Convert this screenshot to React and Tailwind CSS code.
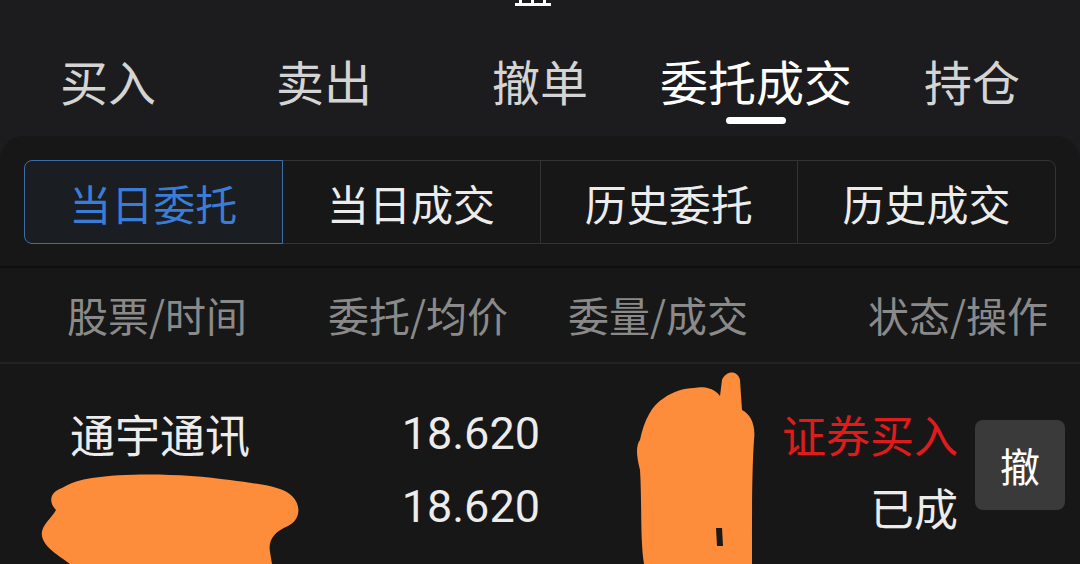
import React, { useState } from 'react'

const CJK = { fontFamily: '"Noto Sans CJK SC", "Noto Sans", sans-serif' }
const NUM = { fontFamily: 'Roboto, "Noto Sans CJK SC", sans-serif' }

const topTabs = ['买入', '卖出', '撤单', '委托成交', '持仓']
const subTabs = ['当日委托', '当日成交', '历史委托', '历史成交']

// Partial status-bar glyph cut off at the top edge
const StatusGlyph = () => (
  <svg width="36" height="6" viewBox="0 0 36 6" className="block">
    <rect x="0" y="3" width="36" height="3" fill="#fff" />
    <rect x="4" y="0" width="3" height="3" fill="#fff" />
    <rect x="16" y="0" width="3" height="3" fill="#fff" />
    <rect x="28" y="0" width="3" height="3" fill="#fff" />
  </svg>
)

// Orange redaction scribbles drawn over the row
const Redactions = () => (
  <svg
    className="absolute left-0 top-0 pointer-events-none"
    width="1080"
    height="564"
    viewBox="0 0 1080 564"
  >
    <path
      fill="#fd8c3b"
      d="M92 478 C130 472 190 474 230 480 C258 484 282 486 292 496 C302 506 300 520 288 526 C274 532 268 540 270 552 L272 564 L70 564 C60 556 44 548 42 536 C40 526 52 518 56 510 C48 502 50 492 62 488 C72 482 80 480 92 478 Z"
    />
    <path
      fill="#fd8c3b"
      d="M722 380 C726 370 738 370 740 380 L742 410 C750 414 756 424 754 440 C752 470 752 510 752 540 L752 564 L644 564 C640 540 642 500 640 470 C636 455 636 445 640 440 C644 420 652 405 664 398 C672 392 684 388 694 388 C704 386 714 388 720 396 Z"
    />
    <path fill="#1a1a1a" d="M716 528 L722 528 L723 546 L717 546 Z" />
  </svg>
)

export default function App() {
  const [top, setTop] = useState(3)
  const [sub, setSub] = useState(0)

  return (
    <div className="w-[1080px] h-[564px] overflow-hidden bg-[#1c1c1e] relative" style={CJK}>
      {/* status bar remnant */}
      <div className="h-0 flex justify-center">
        <div className="ml-[-15px]">
          <StatusGlyph />
        </div>
      </div>

      {/* top tabs */}
      <div className="h-[136px] grid grid-cols-5 pt-[50px]">
        {topTabs.map((t, i) => (
          <button
            key={t}
            onClick={() => setTop(i)}
            className="flex flex-col items-center"
          >
            <span
              className={`text-[48px] leading-[60px] ${
                i === top ? 'text-white' : 'text-[#d4d4d4]'
              }`}
            >
              {t}
            </span>
            {i === top && <span className="mt-[7px] w-[60px] h-[7px] rounded-full bg-white" />}
          </button>
        ))}
      </div>

      {/* panel */}
      <div className="bg-[#171717] rounded-t-[24px] h-[428px]">
        <div className="px-[24px] pt-[24px] pb-[22px]">
          <div className="flex h-[84px]">
            {subTabs.map((t, i) => (
              <button
                key={t}
                onClick={() => setSub(i)}
                className={`flex-1 flex items-center justify-center text-[42px] border ${
                  i > 0 ? '-ml-px' : 'rounded-l-[8px]'
                } ${i === subTabs.length - 1 ? 'rounded-r-[8px]' : ''} ${
                  i === sub
                    ? 'relative z-10 bg-[#1a1d22] text-[#3b7dd6] border-[#3d6ea6]'
                    : 'border-[#333] text-[#ececec]'
                }`}
              >
                {t}
              </button>
            ))}
          </div>
        </div>

        <div className="h-[2px] bg-[#0e0e0e]" />

        {/* header */}
        <div className="h-[96px] flex items-center text-[41px] text-[#8a8a8a] border-b-2 border-[#222]">
          <div className="w-[328px] pl-[67px]">股票/时间</div>
          <div className="w-[240px]">委托/均价</div>
          <div className="flex-1">委量/成交</div>
          <div className="pr-[32px]">状态/操作</div>
        </div>

        {/* order row */}
        <div className="flex pt-[43px]">
          <div className="w-[300px] pl-[70px] text-[45px] text-[#ececec] leading-[54px]">通宇通讯</div>
          <div className="w-[240px] flex flex-col items-end text-[45px] text-[#ececec] gap-[19px]" style={NUM}>
            <span className="leading-[54px]">18.620</span>
            <span className="leading-[54px]">18.620</span>
          </div>
          <div className="flex-1" />
          <div className="flex flex-col items-end text-[44px] gap-[19px]">
            <span className="leading-[54px] text-[#e01b1b]">证券买入</span>
            <span className="leading-[54px] text-[#ececec]">已成</span>
          </div>
          <div className="ml-[17px] mr-[15px] mt-[13px] w-[90px] h-[90px] rounded-[8px] bg-[#3a3a3a] flex items-center justify-center text-[40px] text-white">
            撤
          </div>
        </div>
      </div>

      <Redactions />
    </div>
  )
}
